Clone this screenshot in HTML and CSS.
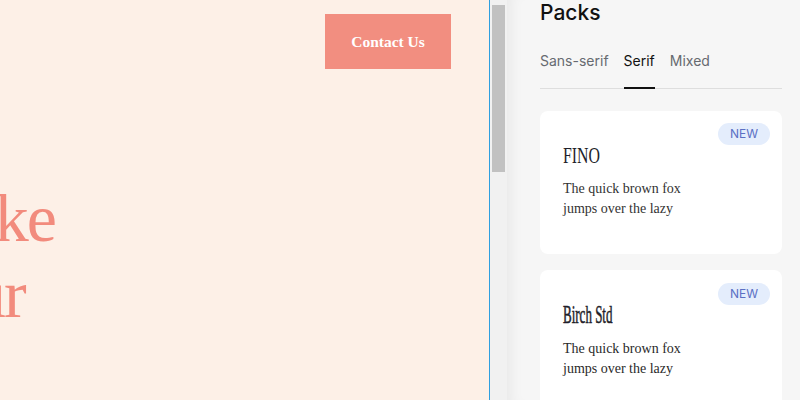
FILE: index.html
```html
<!DOCTYPE html>
<html>
<head>
<meta charset="utf-8">
<link rel="stylesheet" href="styles.css">
</head>
<body>
<div class="page">
  <div class="preview">
    <div class="topbar">
      <div class="contact">Contact Us</div>
    </div>
    <h1 class="hero">Make<br>your</h1>
  </div>
  <div class="scroll">
    <div class="thumb"></div>
  </div>
  <div class="panel">
    <div class="title">Packs</div>
    <div class="tabs">
      <div class="tab">Sans-serif</div>
      <div class="tab active">Serif</div>
      <div class="tab">Mixed</div>
    </div>
    <div class="cards">
      <div class="card">
        <span class="badge">NEW</span>
        <div class="name"><span class="fino">FINO</span></div>
        <p class="sample">The quick brown fox jumps over the lazy</p>
      </div>
      <div class="card">
        <span class="badge">NEW</span>
        <div class="name"><span class="birch">Birch Std</span></div>
        <p class="sample sample2">The quick brown fox jumps over the lazy</p>
      </div>
    </div>
  </div>
</div>
</body>
</html>
```
FILE: styles.css
```css
html, body {
  margin: 0;
  padding: 0;
  width: 800px;
  height: 400px;
  overflow: hidden;
}
.page {
  display: flex;
  width: 800px;
  height: 400px;
}
.preview {
  width: 489px;
  height: 400px;
  background: #fdf0e7;
  border-right: 1px solid #2f9fe0;
  overflow: hidden;
  flex: none;
}
.topbar {
  display: flex;
  justify-content: flex-end;
  padding: 14px 38px 0 0;
}
.contact {
  width: 126px;
  height: 55px;
  background: #f28e80;
  color: #fff;
  font-family: "Liberation Serif", serif;
  font-weight: bold;
  font-size: 15.5px;
  display: flex;
  align-items: center;
  justify-content: center;
}
.hero {
  margin: 111px 0 0 -92px;
  font-family: "Liberation Serif", serif;
  font-weight: normal;
  font-size: 68px;
  line-height: 76px;
  color: #f28b7d;
  letter-spacing: -2px;
  white-space: nowrap;
}
.scroll {
  width: 17px;
  flex: none;
  background: #f1f1f1;
  padding: 5px 0 0 2px;
  box-sizing: border-box;
}
.thumb {
  width: 13px;
  height: 167px;
  background: #c1c1c1;
}
.panel {
  flex: 1;
  background: #f6f6f6;
  padding: 1px 18px 0 33px;
  box-shadow: inset 14px 0 14px -10px rgba(0, 0, 0, 0.06);
  font-family: Inter, "Liberation Sans", sans-serif;
}
.title {
  font-size: 21px;
  line-height: 24px;
  font-weight: 500;
  color: #111;
}
.tabs {
  display: flex;
  gap: 15px;
  margin-top: 26px;
  border-bottom: 1px solid #dedede;
}
.tab {
  font-size: 14px;
  line-height: 20px;
  color: #666a70;
  padding-bottom: 16px;
  border-bottom: 2px solid transparent;
  margin-bottom: -1px;
}
.tab.active {
  color: #111;
  border-bottom-color: #111;
}
.cards {
  display: flex;
  flex-direction: column;
  gap: 16px;
  margin-top: 22px;
}
.card {
  position: relative;
  background: #fff;
  border-radius: 8px;
  padding: 31px 24px 35px 23px;
}
.badge {
  position: absolute;
  top: 12px;
  right: 12px;
  width: 52px;
  height: 22px;
  border-radius: 11px;
  background: #e4edfc;
  color: #5b70c4;
  font-size: 12px;
  line-height: 22px;
  text-align: center;
}
.card + .card .badge {
  top: 13px;
}
.name {
  height: 28px;
  font-family: "Liberation Serif", serif;
  font-size: 23px;
  line-height: 28px;
  color: #1f1f2a;
  white-space: nowrap;
}
.fino {
  display: inline-block;
  transform: scaleX(0.69);
  transform-origin: left center;
}
.birch {
  display: inline-block;
  font-size: 26px;
  transform: scaleX(0.5);
  transform-origin: left center;
  -webkit-text-stroke: 0.6px #1f1f2a;
}
.sample {
  margin: 9px 0 0;
  width: 130px;
  font-family: "Liberation Serif", serif;
  font-size: 14px;
  line-height: 20px;
  color: #333;
}
.sample2 {
  margin-top: 10px;
  color: #2a2a2a;
}
```
